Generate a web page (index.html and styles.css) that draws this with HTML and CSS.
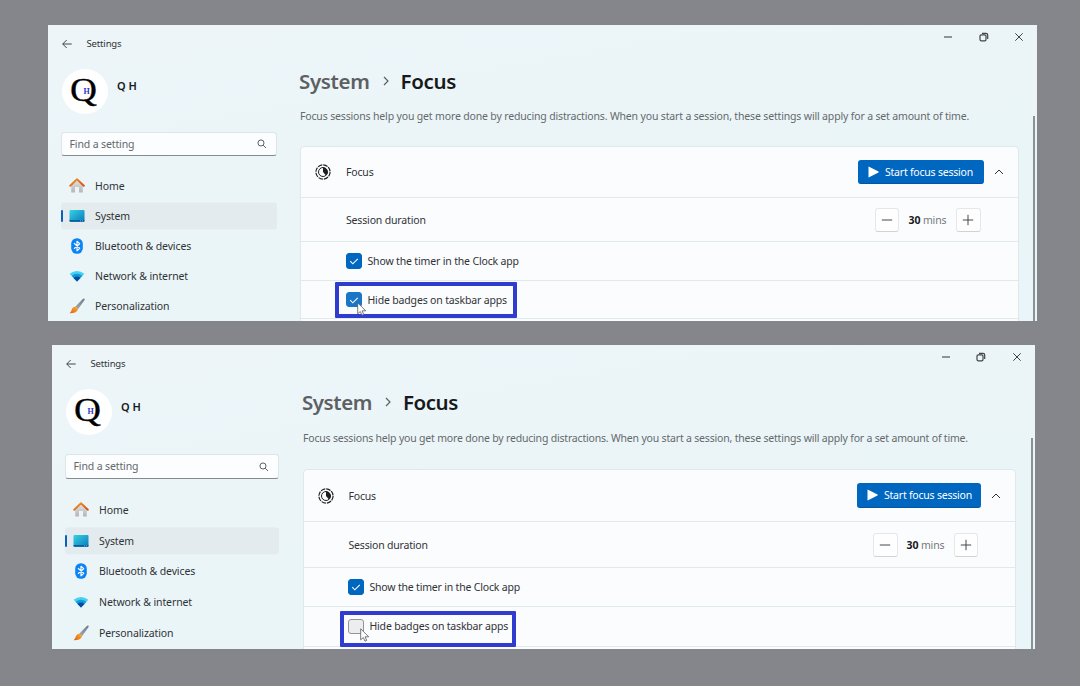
FILE: index.html
```html
<!DOCTYPE html>
<html lang="en">
<head>
<meta charset="utf-8">
<title>Settings - Focus</title>
<link rel="stylesheet" href="styles.css">
</head>
<body>
<svg class="defs" aria-hidden="true">
  <defs>
    <linearGradient id="roof" x1="0" y1="0" x2="1" y2="1"><stop offset="0" stop-color="#f29a2e"/><stop offset="1" stop-color="#d4500f"/></linearGradient>
    <linearGradient id="wall" x1="0" y1="0" x2="0" y2="1"><stop offset="0" stop-color="#e2e2e4"/><stop offset="1" stop-color="#b5b5b8"/></linearGradient>
    <linearGradient id="screen" x1="0" y1="0" x2="1" y2="1"><stop offset="0" stop-color="#35d3e2"/><stop offset="1" stop-color="#0b78bd"/></linearGradient>
    <linearGradient id="handle" x1="1" y1="0" x2="0" y2="1"><stop offset="0" stop-color="#6d7985"/><stop offset="1" stop-color="#a5adb4"/></linearGradient>
    <linearGradient id="bristle" x1="1" y1="0" x2="0" y2="1"><stop offset="0" stop-color="#ffb02e"/><stop offset="1" stop-color="#e05d10"/></linearGradient>
    <symbol id="home" viewBox="0 0 16 16"><path d="M2.200 6.500 8 2l5.800 4.500v8.100H10V9H6v5.600H2.200z" fill="url(#wall)"/><path d="M1.200 7.800 8 1.300l6.800 6.500" fill="none" stroke="url(#roof)" stroke-width="1.900" stroke-linecap="round" stroke-linejoin="round"/></symbol>
    <symbol id="system" viewBox="0 0 16 16"><rect x=".5" y="2" width="15" height="11.700" rx="1" fill="url(#screen)"/><path d="M.5 12h15v.8q0 .9-1 .9h-13q-1 0-1-.9z" fill="#075e9c"/><path d="M11 12.800h1M13 12.800h1" stroke="#8dd9f4" stroke-width=".7"/></symbol>
    <symbol id="bluetooth" viewBox="0 0 16 16"><rect x="2.200" y=".2" width="11.600" height="15.600" rx="5.600" fill="#0a84f5"/><path d="m5 5.300 5.700 5L8 12.800V3.200l2.700 2.500L5 10.700" fill="none" stroke="#fff" stroke-width="1.150" stroke-linejoin="round"/></symbol>
    <symbol id="network" viewBox="0 0 16 16"><path d="M.6 5.700Q8 .2 15.400 5.700L8 13.600z" fill="#43d2f1"/><path d="M2.600 7.700Q8 3.600 13.400 7.700L8 13.600z" fill="#1599dc"/><path d="M4.500 9.900Q8 7 11.500 9.900L8 13.600z" fill="#064c9d"/></symbol>
    <symbol id="brush" viewBox="0 0 16 16"><path d="M15.500.8q.5.500-.1 1.500L9 11.200 6 9l7.800-7.900q1-.9 1.700-.3z" fill="url(#handle)"/><path d="M6.100 8.800q2.500.4 2.800 2.600-.6 3.500-8.300 3.800 1.500-1 2-3.100.7-3 3.500-3.300z" fill="url(#bristle)"/></symbol>
    <symbol id="back" viewBox="0 0 10 10"><path d="M9.700 5H.8M4.700 1 .7 5l4 4" fill="none" stroke="currentColor" stroke-width=".9"/></symbol>
    <symbol id="search" viewBox="0 0 10 10"><circle cx="4.200" cy="4.200" r="3.200" fill="none" stroke="currentColor"/><path d="m6.500 6.500 3 3" stroke="currentColor"/></symbol>
    <symbol id="minimize" viewBox="0 0 10 10"><path d="M1 5h8" stroke="currentColor" stroke-width="1.100"/></symbol>
    <symbol id="restore" viewBox="0 0 10 10"><rect x="1" y="2.800" width="6" height="6" rx="1.300" fill="none" stroke="currentColor" stroke-width="1.200"/><path d="M3 1.300h4q1.700 0 1.700 1.700v4" fill="none" stroke="currentColor" stroke-width="1.200"/></symbol>
    <symbol id="close" viewBox="0 0 10 10"><path d="m1.300 1.300 7.400 7.400m0-7.400L1.300 8.700" stroke="currentColor"/></symbol>
    <symbol id="right" viewBox="0 0 10 10"><path d="m3 1 4 4-4 4" fill="none" stroke="currentColor" stroke-width="1.200"/></symbol>
    <symbol id="up" viewBox="0 0 10 10"><path d="m1 7 4-4 4 4" fill="none" stroke="currentColor"/></symbol>
    <symbol id="focus" viewBox="0 0 16 16"><circle cx="8" cy="8" r="7.100" fill="none" stroke="currentColor" stroke-width="1.200" stroke-dasharray="4.600 .98"/><circle cx="8" cy="8" r="4.500" fill="none" stroke="currentColor"/><path d="M8 3.500a4.500 4.500 0 0 1 3 7.900L8 8z" fill="currentColor"/></symbol>
    <symbol id="play" viewBox="0 0 11 12"><path d="M.5 1v10q0 .6.600.3l9.400-4.900q.5-.4 0-.8L1.100.7Q.5.400.5 1z" fill="#fff"/></symbol>
    <symbol id="minus" viewBox="0 0 12 12"><path d="M.8 6h10.400" stroke="currentColor"/></symbol>
    <symbol id="plus" viewBox="0 0 12 12"><path d="M.8 6h10.400M6 .8v10.400" stroke="currentColor"/></symbol>
    <symbol id="check" viewBox="0 0 10 10"><path d="m1.200 5.200 2.600 2.600 5-5" fill="none" stroke="#fff" stroke-width="1.100"/></symbol>
    <symbol id="pointer" viewBox="0 0 10 14"><path d="M.7.800v11l2.600-2.300 1.700 3.700 1.700-.8-1.600-3.600h3.600z" fill="#fff" stroke="#55555c" stroke-width=".8"/></symbol>
  </defs>
</svg>

<section class="window first">
  <header class="titlebar">
    <svg class="back"><use href="#back"/></svg><span class="app-name">Settings</span>
    <div class="controls"><svg><use href="#minimize"/></svg><svg><use href="#restore"/></svg><svg><use href="#close"/></svg></div>
  </header>
  <div class="body">
    <aside class="sidebar">
      <div class="profile"><div class="avatar"><span class="big-q">Q</span><span class="small-h">H</span></div><strong class="user">Q H</strong></div>
      <div class="search"><span>Find a setting</span><svg><use href="#search"/></svg></div>
      <nav class="nav">
        <a class="item"><svg><use href="#home"/></svg><span>Home</span></a>
        <a class="item selected"><svg><use href="#system"/></svg><span>System</span></a>
        <a class="item"><svg><use href="#bluetooth"/></svg><span>Bluetooth &amp; devices</span></a>
        <a class="item"><svg><use href="#network"/></svg><span>Network &amp; internet</span></a>
        <a class="item"><svg><use href="#brush"/></svg><span>Personalization</span></a>
      </nav>
    </aside>
    <main class="main">
      <h1 class="crumbs"><span class="parent">System</span><svg><use href="#right"/></svg><span>Focus</span></h1>
      <p class="intro">Focus sessions help you get more done by reducing distractions. When you start a session, these settings will apply for a set amount of time.</p>
      <div class="card">
        <div class="row head"><svg class="focus-icon"><use href="#focus"/></svg><span class="t-focus">Focus</span><button class="start"><svg><use href="#play"/></svg><span>Start focus session</span></button><svg class="expand"><use href="#up"/></svg></div>
        <div class="row duration"><span class="t-duration">Session duration</span><div class="stepper"><button><svg><use href="#minus"/></svg></button><span class="amount"><b>30</b> mins</span><button><svg><use href="#plus"/></svg></button></div></div>
        <div class="row option timer"><span class="box checked"><svg><use href="#check"/></svg></span><span class="t-timer">Show the timer in the Clock app</span></div>
        <div class="row option badges"><span class="box checked hover"><svg><use href="#check"/></svg></span><span class="t-badges">Hide badges on taskbar apps</span><i class="highlight"></i><svg class="pointer"><use href="#pointer"/></svg></div>
      </div>
    </main>
    <div class="scrollbar"></div>
  </div>
</section>

<section class="window second">
  <header class="titlebar">
    <svg class="back"><use href="#back"/></svg><span class="app-name">Settings</span>
    <div class="controls"><svg><use href="#minimize"/></svg><svg><use href="#restore"/></svg><svg><use href="#close"/></svg></div>
  </header>
  <div class="body">
    <aside class="sidebar">
      <div class="profile"><div class="avatar"><span class="big-q">Q</span><span class="small-h">H</span></div><strong class="user">Q H</strong></div>
      <div class="search"><span>Find a setting</span><svg><use href="#search"/></svg></div>
      <nav class="nav">
        <a class="item"><svg><use href="#home"/></svg><span>Home</span></a>
        <a class="item selected"><svg><use href="#system"/></svg><span>System</span></a>
        <a class="item"><svg><use href="#bluetooth"/></svg><span>Bluetooth &amp; devices</span></a>
        <a class="item"><svg><use href="#network"/></svg><span>Network &amp; internet</span></a>
        <a class="item"><svg><use href="#brush"/></svg><span>Personalization</span></a>
      </nav>
    </aside>
    <main class="main">
      <h1 class="crumbs"><span class="parent">System</span><svg><use href="#right"/></svg><span>Focus</span></h1>
      <p class="intro">Focus sessions help you get more done by reducing distractions. When you start a session, these settings will apply for a set amount of time.</p>
      <div class="card">
        <div class="row head"><svg class="focus-icon"><use href="#focus"/></svg><span class="t-focus">Focus</span><button class="start"><svg><use href="#play"/></svg><span>Start focus session</span></button><svg class="expand"><use href="#up"/></svg></div>
        <div class="row duration"><span class="t-duration">Session duration</span><div class="stepper"><button><svg><use href="#minus"/></svg></button><span class="amount"><b>30</b> mins</span><button><svg><use href="#plus"/></svg></button></div></div>
        <div class="row option timer"><span class="box checked"><svg><use href="#check"/></svg></span><span class="t-timer">Show the timer in the Clock app</span></div>
        <div class="row option badges"><span class="box"></span><span class="t-badges">Hide badges on taskbar apps</span><i class="highlight"></i><svg class="pointer"><use href="#pointer"/></svg></div>
      </div>
    </main>
    <div class="scrollbar"></div>
  </div>
</section>
</body>
</html>
```

FILE: styles.css
```css
* { box-sizing: border-box; }
body {
  margin: 0; height: 686px; padding: 25px 0 0 48px; overflow: hidden;
  background: #85868b; color: #303336;
  font: 10.5px/16px "Noto Sans", "Open Sans", sans-serif;
}
svg { display: block; flex: none; }
span, strong { white-space: nowrap; }
button { font: inherit; padding: 0; }
.defs { position: absolute; width: 0; height: 0; }

.window {
  display: flex; flex-direction: column; overflow: hidden;
  background: linear-gradient(170deg, #edf5f9 0%, #ebf5f8 40%, #e9f5f8 100%);
}
.first {
  width: 989px; height: 296px;
  --side: 252px; --search-top: 17.500px; --nav-top: 15px; --item: 30px; --sel: 27px;
  --search-w: 215.500px; --main-w: 718.500px; --crumb-top: 5px; --intro-top: 12px; --card-top: 22px;
  --head: 51px; --dur: 44px; --opt: 38.700px; --scroll-top: 55px; --user-top: 9px;
  --track: -.16px; --intro-track: -.16px; --option-x: 44.500px; --start-w: 126px; --avatar-h: 45px;
}
.second {
  width: 983px; height: 304px; margin: 24px 0 0 4px;
  --side: 251px; --search-top: 19px; --nav-top: 16px; --item: 30.750px; --sel: 27.500px;
  --search-w: 213.500px; --main-w: 713px; --crumb-top: 6px; --intro-top: 13px; --card-top: 23px;
  --head: 52px; --dur: 46px; --opt: 39.300px; --scroll-top: 57px; --user-top: 9.500px;
  --track: -.19px; --intro-track: -.19px; --option-x: 43.500px; --start-w: 124.500px; --avatar-h: 46px;
}

.titlebar { height: 36px; flex: none; display: flex; align-items: center; padding: 1px 13px 0 13.500px; }
.back { width: 10px; height: 10px; }
.app-name { margin-left: 15px; font-size: 9.500px; letter-spacing: -.15px; }
.controls { margin-left: auto; align-self: flex-start; display: flex; gap: 25.500px; padding-top: 6px; color: #414447; }
.second .controls { padding-right: .5px; }
.controls svg { width: 10px; height: 10px; }

.body { flex: 1; min-height: 0; display: flex; }
.sidebar { width: var(--side); flex: none; padding: 8px 0 0 13.500px; }
.profile { display: flex; gap: 9.500px; height: var(--avatar-h); }
.avatar { position: relative; width: 46px; height: var(--avatar-h); border-radius: 50%; background: #fff; font-family: "Liberation Serif", serif; color: #000; }
.big-q { position: absolute; left: 8.500px; top: 3.500px; font-size: 34px; line-height: 34px; transform: scaleX(1.1); transform-origin: left; -webkit-text-stroke: .3px #000; }
.small-h { position: absolute; left: 22px; top: 17px; font-size: 8px; line-height: 12px; font-weight: 700; color: #2937c8; }
.user { padding-top: var(--user-top); font-size: 11px; line-height: 16px; font-weight: 600; color: #17191b; height: 26px; }
.search {
  display: flex; align-items: center; justify-content: space-between;
  width: var(--search-w); height: 24.500px; margin-top: var(--search-top); padding: 0 9px 0 7.500px;
  margin-left: -.5px;
  background: #fbfdfe; border: 1px solid #dde5e8; border-bottom-color: #858c90; border-radius: 3px; color: #64686c;
}
.search span { letter-spacing: -.13px; }
.search svg { width: 9.500px; height: 9.500px; color: #55595d; }
.nav { margin-top: var(--nav-top); margin-left: -.5px; width: var(--search-w); }
.item { position: relative; display: flex; align-items: center; height: var(--item); padding-left: 7.500px; z-index: 0; }
.item svg { width: 16px; height: 16px; margin-right: 10.500px; }
.item span { letter-spacing: -.1px; }
.selected::before { content: ""; position: absolute; z-index: -1; left: 0; right: 0; top: 50%; height: var(--sel); transform: translateY(-50%); background: #e3ebee; border-radius: 3px; }
.selected::after { content: ""; position: absolute; left: 0; top: 50%; width: 2.400px; height: 12px; transform: translateY(-50%); background: #0a61bd; border-radius: 1px; }

.main { width: var(--main-w); flex: none; }
.crumbs { display: flex; align-items: center; height: 30px; margin: var(--crumb-top) 0 0 -1px; font-size: 20.500px; line-height: 30px; font-weight: 600; color: #17191b; letter-spacing: -.35px; }
.second .crumbs { letter-spacing: -.45px; }
.crumbs svg { width: 10px; height: 10px; margin: 0 9.500px 0 11.500px; color: #5c6063; }
.crumbs .parent { color: #5c6063; }
.intro { height: 16px; margin: var(--intro-top) 0 0; color: #65696c; white-space: nowrap; letter-spacing: var(--intro-track); }
.card { margin-top: var(--card-top); height: 220px; border: 1px solid #dde9eb; border-radius: 4px; background: #fbfcfe; }
.row { position: relative; display: flex; align-items: center; border-bottom: 1.500px solid #dfeaec; letter-spacing: var(--track); }
.head { height: var(--head); padding: 0 14px 0 13.500px; }
.focus-icon { width: 16px; height: 16px; color: #1d1f21; }
.t-focus { margin-left: 15.500px; }
.second .t-focus { margin-left: 15px; }
.start { display: flex; align-items: center; margin-left: auto; width: var(--start-w); height: 24.500px; padding-left: 10px; border: 0; border-bottom: 1px solid #0456a5; border-radius: 3px; background: #0067c0; color: #fff; letter-spacing: -.22px; }
.start svg { width: 11px; height: 12px; margin-right: 6.500px; }
.first .start { margin-right: -.5px; }
.expand { width: 10px; height: 10px; margin-left: 10.500px; }
.second .expand { margin-left: 10px; margin-right: 0; }
.duration { height: var(--dur); padding-left: 45px; }
.second .duration { padding-left: 44.500px; }
.stepper { display: flex; align-items: center; margin-left: auto; padding-right: 37px; }
.stepper button { display: grid; place-items: center; width: 24.500px; height: 24px; border: 1px solid #e5e8ea; border-bottom-color: #cfd3d6; border-radius: 3px; background: #fefeff; color: #45484b; }
.stepper svg { width: 12px; height: 12px; }
.amount { width: 57px; text-align: center; color: #75787b; letter-spacing: -.13px; }
.second .amount { width: 56px; }
.amount b { color: #17191b; font-weight: 700; }
.option { height: var(--opt); padding-left: var(--option-x); }
.box { display: grid; place-items: center; width: 16px; height: 15.500px; margin-right: 6px; border: 1px solid #929598; border-radius: 3px; background: #ededef; }
.checked { border-color: #0067c0; background: #0067c0; }
.hover { border-color: #1a76c6; background: #1a76c6; }
.box svg { width: 10px; height: 10px; }
.highlight { position: absolute; left: 34px; top: 1.500px; width: 181.500px; height: 36px; border: 4px solid #2f3ccd; border-radius: 1px; }
.second .highlight { left: 35.500px; top: 3.500px; width: 176.500px; }
.pointer { position: absolute; left: 56px; top: 21px; width: 10px; height: 14px; }
.scrollbar { width: 2px; margin: var(--scroll-top) 0 0 auto; margin-right: 2px; background: #899396; }
```
